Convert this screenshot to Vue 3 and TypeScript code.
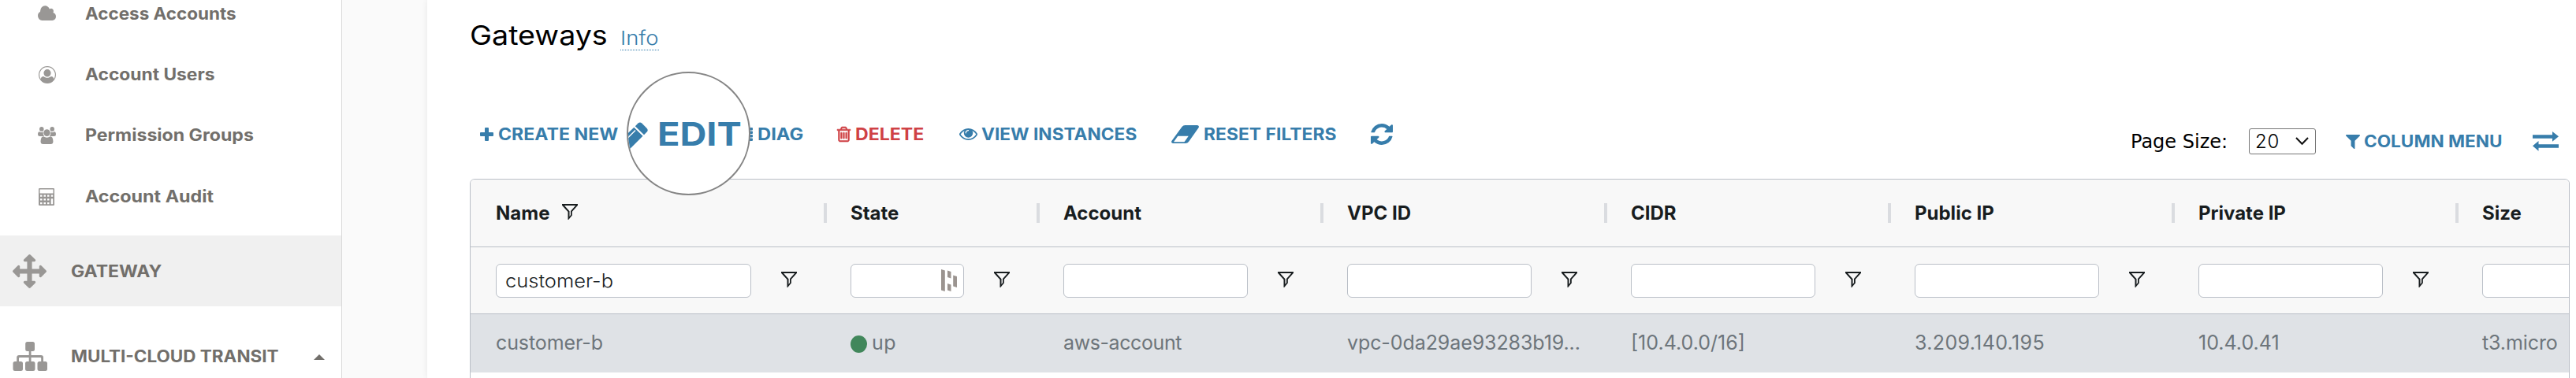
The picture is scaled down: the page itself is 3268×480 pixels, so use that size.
<script setup lang="ts">
interface Shape { box: string; d: string; rule?: 'evenodd' }

const icons: Record<string, Shape> = {
  cloud: { box: '64 256 1920 1280', d: 'M1984 1152q0 159-112.5 271.5t-271.5 112.5h-1088q-185 0-316.5-131.5t-131.5-316.5q0-132 71-241.5t187-163.5q-2-28-2-43 0-212 150-362t362-150q158 0 286.5 88t187.5 230q70-62 166-62 106 0 181 75t75 181q0 75-41 138 129 30 213 134.5t84 239.5z' },
  user: { box: '0 0 22 22', rule: 'evenodd', d: 'M11 0a11 11 0 1 0 0 22a11 11 0 0 0 0-22zM11 1.2a9.8 9.8 0 0 1 8.3 15c-.5-2.2-1.7-3.3-3.5-3.3c-2.8 2.4-6.8 2.4-9.6 0c-1.8 0-3 1.100-3.500 3.300a9.800 9.800 0 0 1 8.300-15zM11 4a4.600 4.800 0 1 1 0 9.600a4.600 4.800 0 1 1 0-9.600z' },
  users: { box: '0 0 24 22', d: 'M5 0a2.900 2.900 0 1 1 0 5.800a2.900 2.900 0 1 1 0-5.800zM19 0a2.900 2.900 0 1 1 0 5.800a2.900 2.900 0 1 1 0-5.800zM12 3.200a4.400 4.400 0 1 1 0 8.800a4.400 4.400 0 1 1 0-8.800zM2 6.200q3 1.500 4.900.4q-.3 3.400 1.600 5.400h-6q-2.500 0-2.500-2.200q0-3.600 2-3.600zM22 6.200q-3 1.500-4.900.4q.3 3.400-1.600 5.400h6q2.500 0 2.500-2.200q0-3.600-2-3.600zM7.500 12.300q4.500 2.800 9 0q3.500 0 3.800 6.200q0 3.500-3.300 3.500h-10q-3.300 0-3.300-3.500q.3-6.200 3.800-6.200z' },
  calc: { box: '0 0 20 22', rule: 'evenodd', d: 'M1.200 0h17.600q1.200 0 1.200 1.200v19.600q0 1.200-1.200 1.200h-17.600q-1.200 0-1.200-1.200v-19.600q0-1.200 1.200-1.200zM1.500 1.500v5h17v-5zM2 8.500v2.200h2.500v-2.200zM6.500 8.500v2.200h2.500v-2.200zM11 8.500v2.200h2.500v-2.200zM15.700 8.500v2.200h2.500v-2.200zM2 13.200v2.200h2.500v-2.200zM6.500 13.200v2.200h2.500v-2.200zM11 13.200v2.200h2.500v-2.200zM15.700 13.200v7h2.500v-7zM2 18v2.200h2.500v-2.200zM6.500 18v2.200h2.500v-2.200zM11 18v2.200h2.500v-2.200z' },
  arrows: { box: '0 0 1792 1792', d: 'M1792 896q0 26-19 45l-256 256q-19 19-45 19t-45-19-19-45v-128h-384v384h128q26 0 45 19t19 45-19 45l-256 256q-19 19-45 19t-45-19l-256-256q-19-19-19-45t19-45 45-19h128v-384h-384v128q0 26-19 45t-45 19-45-19l-256-256q-19-19-19-45t19-45l256-256q19-19 45-19t45 19 19 45v128h384v-384h-128q-26 0-45-19t-19-45 19-45l256-256q19-19 45-19t45 19l256 256q19 19 19 45t-19 45-45 19h-128v384h384v-128q0-26 19-45t45-19 45 19l256 256q19 19 19 45z' },
  sitemap: { box: '0 0 44 37', d: 'M18.500 0h7q2.500 0 2.500 2.500v7q0 2.500-2.500 2.500h-2v5h12.500q3 0 3 3v5h2.500q2.500 0 2.500 2.500v7q0 2.500-2.500 2.500h-7.500q-2.500 0-2.500-2.500v-7q0-2.500 2.500-2.500h2.200v-4q0-1-1-1h-11.700v5h2.500q2.500 0 2.500 2.500v7q0 2.500-2.500 2.500h-7.500q-2.500 0-2.500-2.500v-7q0-2.500 2.500-2.500h2.200v-5h-11.700q-1 0-1 1v4h2.500q2.500 0 2.500 2.500v7q0 2.500-2.500 2.500h-7.500q-2.500 0-2.500-2.500v-7q0-2.500 2.500-2.500h2.200v-5q0-3 3-3h12.500v-5h-2q-2.500 0-2.500-2.500v-7q0-2.500 2.500-2.500z' },
  caret: { box: '0 0 14 7', d: 'M0 7L7 0L14 7z' },
  plus: { box: '0 0 17 17', d: 'M7 0h3q1 0 1 1v5h5q1 0 1 1v3q0 1-1 1h-5v5q0 1-1 1h-3q-1 0-1-1v-5h-5q-1 0-1-1v-3q0-1 1-1h5v-5q0-1 1-1z' },
  list: { box: '0 0 9 17', d: 'M0 0h8q1 0 1 1v1.500q0 1-1 1h-8zM0 4.500h8q1 0 1 1v1.500q0 1-1 1h-8zM0 9h8q1 0 1 1v1.500q0 1-1 1h-8zM0 13.500h8q1 0 1 1v1.500q0 1-1 1h-8z' },
  trash: { box: '192 128 1408 1536', d: 'M704 736v576q0 14-9 23t-23 9h-64q-14 0-23-9t-9-23v-576q0-14 9-23t23-9h64q14 0 23 9t9 23zm256 0v576q0 14-9 23t-23 9h-64q-14 0-23-9t-9-23v-576q0-14 9-23t23-9h64q14 0 23 9t9 23zm256 0v576q0 14-9 23t-23 9h-64q-14 0-23-9t-9-23v-576q0-14 9-23t23-9h64q14 0 23 9t9 23zm128 724v-948h-896v948q0 22 7 40.500t14.500 27 10.500 8.500h832q3 0 10.500-8.500t14.500-27 7-40.500zm-672-1076h448l-48-117q-7-9-17-11h-317q-10 2-17 11zm928 32v64q0 14-9 23t-23 9h-96v948q0 83-47 143.500t-113 60.500h-832q-66 0-113-58.500t-47-141.500v-952h-96q-14 0-23-9t-9-23v-64q0-14 9-23t23-9h309l70-167q15-37 54-63t79-26h320q40 0 79 26t54 63l70 167h309q14 0 23 9t9 23z' },
  eye: { box: '0 384 1792 1152', d: 'M1664 960q-152-236-381-353 61 104 61 225 0 185-131.500 316.500t-316.500 131.500-316.500-131.500-131.500-316.500q0-121 61-225-229 117-381 353 133 205 333.500 326.500t434.500 121.500 434.500-121.500 333.500-326.500zm-720-384q0-20-14-34t-34-14q-125 0-214.500 89.500t-89.500 214.500q0 20 14 34t34 14 34-14 14-34q0-86 61-147t147-61q20 0 34-14t14-34zm848 384q0 34-20 69-140 230-376.500 368.500t-499.500 138.500-499.500-139-376.500-368q-20-35-20-69t20-69q140-229 376.500-368t499.500-139 499.500 139 376.500 368q20 35 20 69z' },
  eraser: { box: '0 0 35 23', rule: 'evenodd', d: 'M17.500 0h15.500q2.600.5 1.700 3l-12.700 18q-1.500 2-4 2h-16q-2.700-.6-1.600-3l13.100-18q1.500-2 4-2zM8.300 13.800l-5.300 7.400h13.500l5.300-7.400z' },
  refresh: { box: '128 128 1536 1536', d: 'M1639 1056q0 5-1 7-64 268-268 434.500t-478 166.500q-146 0-282.500-55t-243.500-157l-129 129q-19 19-45 19t-45-19-19-45v-448q0-26 19-45t45-19h448q26 0 45 19t19 45-19 45l-137 137q71 66 161 102t187 36q134 0 250-65t186-179q11-17 53-117 8-23 30-23h192q13 0 22.500 9.500t9.500 22.500zm25-800v448q0 26-19 45t-45 19h-448q-26 0-45-19t-19-45 19-45l138-138q-148-137-349-137-134 0-250 65t-186 179q-11 17-53 117-8 23-30 23h-199q-13 0-22.500-9.500t-9.500-22.500v-7q65-268 270-434.500t480-166.500q146 0 284 55.500t245 156.500l130-129q19-19 45-19t45 19 19 45z' },
  funnel: { box: '192 256 1408 1408', d: 'M1595 295q17 41-14 70l-493 493v742q0 42-39 59-13 5-25 5-27 0-45-19l-256-256q-19-19-19-45v-486l-493-493q-31-29-14-70 17-39 59-39h1280q42 0 59 39z' },
  exchange: { box: '0 0 33 25', d: 'M0 4.200h25v-4.200l8 6.300l-8 6.400v-4h-25zM33 16.200h-25.500v-4.200l-7.500 6.300l7.500 6.400v-4h25.500z' },
  outline: { box: '0 0 20 20', rule: 'evenodd', d: 'M0 0h20v1.700l-7.200 8v4.800l-4.600 5.500h-.7v-10l-7.500-8.300zM3 2l6.500 7.200v6.800l1.500-2v-4.900l6.200-7.100z' },
  marks: { box: '0 0 20 28', d: 'M0 0l4.800 1.500v26.500l-4.800-1.500zM8 1.500l4.500 1.500v8.500l-4.500-1.500zM8 18l4.500 1.500v8.500l-4.500-1.500zM15.200 7.500l4.800 1.500v14l-4.800-1.500z' },
}

interface Entry { label: string; icon: string; stretch: number }
const accounts: Entry[] = [
  { label: 'Access Accounts', icon: 'cloud', stretch: 1.07 },
  { label: 'Account Users', icon: 'user', stretch: 1.085 },
  { label: 'Permission Groups', icon: 'users', stretch: 1.1 },
  { label: 'Account Audit', icon: 'calc', stretch: 1.11 },
]
const actions: Entry[] = [
  { label: 'CREATE NEW', icon: 'plus', stretch: 1.102 },
  { label: 'DIAG', icon: 'list', stretch: 1.13 },
  { label: 'DELETE', icon: 'trash', stretch: 1.1 },
  { label: 'VIEW INSTANCES', icon: 'eye', stretch: 1.08 },
  { label: 'RESET FILTERS', icon: 'eraser', stretch: 1.09 },
]
const columns = [
  { title: 'Name', size: 'wide', filter: 'customer-b', value: 'customer-b', gap: -0.1 },
  { title: 'State', size: 'narrow', filter: '', value: 'up', gap: 0.4 },
  { title: 'Account', size: '', filter: '', value: 'aws-account', gap: -0.4 },
  { title: 'VPC ID', size: '', filter: '', value: 'vpc-0da29ae93283b19...', gap: -0.09 },
  { title: 'CIDR', size: '', filter: '', value: '[10.4.0.0/16]', gap: 0 },
  { title: 'Public IP', size: '', filter: '', value: '3.209.140.195', gap: 0.35 },
  { title: 'Private IP', size: '', filter: '', value: '10.4.0.41', gap: 0 },
  { title: 'Size', size: '', filter: '', value: 't3.micro', gap: -0.1 },
]
const spacing = (gap: number) => ({ letterSpacing: `${gap}px` })
const widen = (stretch: number) => ({ transform: `scaleX(${stretch})` })
</script>

<template>
  <div class="page">
    <nav class="sidebar">
      <div class="group">
        <a v-for="item in accounts" :key="item.label" class="sub">
          <span class="sub-icon">
            <svg :class="['ico', item.icon]" :viewBox="icons[item.icon].box" preserveAspectRatio="none">
              <path :d="icons[item.icon].d" :fill-rule="icons[item.icon].rule" />
            </svg>
          </span>
          <span class="label" :style="widen(item.stretch)">{{ item.label }}</span>
        </a>
      </div>
      <a class="top active">
        <svg class="ico arrows" :viewBox="icons.arrows.box" preserveAspectRatio="none"><path :d="icons.arrows.d" /></svg>
        <span class="label gateway">GATEWAY</span>
      </a>
      <a class="top transit">
        <svg class="ico sitemap" :viewBox="icons.sitemap.box" preserveAspectRatio="none"><path :d="icons.sitemap.d" /></svg>
        <span class="label multi">MULTI-CLOUD TRANSIT</span>
        <svg class="ico caret" :viewBox="icons.caret.box" preserveAspectRatio="none"><path :d="icons.caret.d" /></svg>
      </a>
    </nav>

    <main class="main">
      <header class="heading">
        <h1><span class="label title">Gateways</span></h1>
        <a class="info"><span class="label info-text">Info</span></a>
      </header>

      <div class="toolbar">
        <div class="actions">
          <button v-for="action in actions" :key="action.label" :class="['action', 'act-' + action.icon]">
            <span class="slot">
              <svg :class="['ico', action.icon]" :viewBox="icons[action.icon].box" preserveAspectRatio="none">
                <path :d="icons[action.icon].d" :fill-rule="icons[action.icon].rule" />
              </svg>
            </span>
            <span class="label" :style="widen(action.stretch)">{{ action.label }}</span>
          </button>
          <button class="action">
            <svg class="ico refresh" :viewBox="icons.refresh.box" preserveAspectRatio="none"><path :d="icons.refresh.d" /></svg>
          </button>
        </div>
        <div class="paging">
          <span class="size-label">Page Size:</span>
          <span class="select">20
            <svg class="chevron" viewBox="0 0 17 10"><path d="M1 1L8.500 8.700L16 1" /></svg>
          </span>
          <button class="action">
            <span class="slot menu-slot">
              <svg class="ico funnel" :viewBox="icons.funnel.box" preserveAspectRatio="none"><path :d="icons.funnel.d" /></svg>
            </span>
            <span class="label menu">COLUMN MENU</span>
          </button>
          <button class="action">
            <svg class="ico exchange" :viewBox="icons.exchange.box" preserveAspectRatio="none"><path :d="icons.exchange.d" /></svg>
          </button>
        </div>
      </div>

      <section class="grid">
        <div class="row head">
          <div v-for="col in columns" :key="col.title" :class="['cell', col.size]">
            <span>{{ col.title }}</span>
            <svg v-if="col.filter" class="outline" :viewBox="icons.outline.box"><path :d="icons.outline.d" fill-rule="evenodd" /></svg>
            <i class="divider"></i>
          </div>
        </div>
        <div class="row filters">
          <div v-for="col in columns" :key="col.title" :class="['cell', col.size]">
            <div class="field">
              <span class="label typed">{{ col.filter }}</span>
              <svg v-if="col.title === 'State'" class="marks" :viewBox="icons.marks.box" preserveAspectRatio="none"><path :d="icons.marks.d" /></svg>
            </div>
            <svg class="outline" :viewBox="icons.outline.box"><path :d="icons.outline.d" fill-rule="evenodd" /></svg>
          </div>
        </div>
        <div class="row selected">
          <div v-for="col in columns" :key="col.title" :class="['cell', col.size]">
            <i v-if="col.title === 'State'" class="dot"></i>
            <span :style="spacing(col.gap)">{{ col.value }}</span>
          </div>
        </div>
      </section>

      <div class="lens">
        <svg class="pencil" viewBox="0 0 30 50">
          <path d="M14.500 11.500q2.500-2 4.800 0l6.400 6.400q2 2.300 0 4.600l-3.700 3.800l-11.200-11z" />
          <path d="M9.300 16.700l11.200 11.100l-20 20l-12-11z" />
          <path class="shine" d="M11 20.500L-4 35.500" />
        </svg>
        <span class="label edit">EDIT</span>
      </div>
    </main>
  </div>
</template>

<style>
body { margin: 0; overflow: hidden; }
</style>

<style scoped>
.page { display: flex; width: 3268px; height: 480px; overflow: hidden; background: #fafafa; font-family: Inter, "Liberation Sans", sans-serif; }
.page * { box-sizing: border-box; }
svg { display: block; flex: none; overflow: visible; }
.ico { fill: currentColor; }
.label { display: inline-block; transform-origin: 0 50%; }

.sidebar { flex: none; width: 434px; height: 480px; overflow: hidden; background: #fff; border-right: 1px solid #d9d9d9; color: #726f6b; font-size: 21px; font-weight: 700; line-height: 30px; white-space: nowrap; }
.sidebar .ico { color: #999795; }
.group { margin-top: -21px; height: 320px; }
.sub { display: flex; align-items: center; height: 77.300px; }
.sub-icon { width: 60px; margin-left: 48px; }
.cloud { width: 23px; height: 17px; }
.user { width: 22px; height: 22px; margin-left: 1px; }
.users { width: 23px; height: 22px; }
.calc { width: 20px; height: 22px; margin-left: 1px; }
.top { display: flex; align-items: center; padding-left: 16px; }
.active { height: 90px; background: #f0f0f0; margin-right: -1px; border-right: 1px solid #cbcbcb; }
.transit { height: 127px; }
.arrows { width: 43px; height: 43px; }
.sitemap { width: 44px; height: 37px; }
.gateway { margin: 2px 0 0 30.500px; transform: scaleX(1.095); }
.multi { width: 264px; margin-left: 30px; transform: scaleX(1.07); }
.sidebar .caret { width: 14px; height: 7px; margin: 2px 0 0 44px; color: #726f6b; }

.main { position: relative; flex: 1; min-width: 0; margin-left: 108px; padding-left: 54px; background: #fff; box-shadow: 0 0 8px rgba(0, 0, 0, .08); }
.heading { display: flex; align-items: baseline; height: 89px; }
h1 { margin: 0; font-size: 34.500px; font-weight: 400; line-height: 89px; color: #000; width: 191px; white-space: nowrap; }
.title { transform: scaleX(1.09); }
.info { font-size: 24.500px; line-height: 25px; font-weight: 300; padding-bottom: 2px; border-bottom: 1px dotted #377dab; color: #377dab; width: 49px; }
.info-text { transform: scaleX(1.12); }

.toolbar { display: grid; grid-template-columns: 2107px 1fr; height: 138px; align-items: start; }
.actions { display: grid; grid-template-columns: 337px 116px 155px 269px 253px 40px; padding: 61.500px 0 0 13px; }
.action { display: flex; align-items: center; height: 40px; padding: 0; border: 0; background: none; font: 700 21px/40px Inter, sans-serif; color: #377dab; white-space: nowrap; }
.act-trash { color: #cf4145; }
.slot { width: 23px; }
.act-list .slot { width: 14.500px; }
.act-eye .slot { width: 28px; }
.act-eraser .slot { width: 40.500px; }
.menu-slot { width: 23px; }
.menu { transform: scaleX(1.075); }
.plus { width: 17px; height: 17px; }
.list { width: 9px; height: 17px; }
.trash { width: 17px; height: 19px; stroke: currentColor; stroke-width: 50; }
.eye { width: 23px; height: 15px; }
.eraser { width: 35px; height: 23px; }
.refresh { width: 28px; height: 27px; }
.funnel { width: 18px; height: 18px; }
.exchange { width: 33px; height: 25px; }
.paging { display: grid; grid-template-columns: 150px 123px 237px 33px; align-items: center; padding-top: 70.500px; height: 110px; }
.size-label { font: 24px/40px "DejaVu Sans", sans-serif; color: #000; white-space: nowrap; }
.select { display: flex; align-items: center; justify-content: space-between; width: 85px; height: 33px; margin-top: -1px; padding: 0 8px 0 7px; border: 1px solid #767676; border-radius: 3px; font-size: 24px; font-weight: 300; letter-spacing: .8px; line-height: 31px; color: #000; background: #fff; }
.chevron { width: 17px; height: 10px; fill: none; stroke: #111; stroke-width: 2; }

.grid { width: 2664px; height: 300px; overflow: hidden; border: 1px solid #babfc7; border-radius: 6px 6px 0 0; background: #fff; }
.row { display: flex; }
.cell { position: relative; display: flex; align-items: center; flex: none; width: 360px; padding-left: 32px; white-space: nowrap; }
.wide { width: 450px; }
.narrow { width: 270px; }
.head { height: 86px; border-bottom: 1px solid #babfc7; background: #f8f8f8; color: #181d1f; font-size: 24px; font-weight: 700; }
.head .outline { margin: -3px 0 0 15.500px; }
.divider { position: absolute; right: -2px; top: 30px; width: 4px; height: 25px; background: #dadce0; }
.filters { height: 85px; border-bottom: 1px solid #babfc7; background: #f8f8f8; }
.field { display: flex; align-items: center; justify-content: space-between; width: 234px; height: 43px; padding: 0 8px 0 11px; border: 1px solid #babfc7; border-radius: 6px; background: #fff; color: #181d1f; font-size: 23.500px; font-weight: 300; }
.typed { transform: scaleX(1.085); }
.wide .field { width: 324px; }
.narrow .field { width: 144px; }
.filters .outline { margin: -3px 0 0 38px; }
.outline { width: 20px; height: 20px; fill: #181d1f; }
.marks { width: 20px; height: 28px; fill: #9b9490; }
.selected { height: 74px; background: #dfe2e6; color: #6d757b; font-size: 25px; padding-bottom: 2px; }
.dot { width: 21px; height: 22px; margin: 4px 6px 0 0; border-radius: 50%; background: #41875b; }

.lens { position: absolute; left: 253px; top: 91px; width: 157px; height: 157px; overflow: hidden; border: 2.500px solid #858585; border-radius: 50%; background: #fff; color: #377dab; display: flex; align-items: center; font-size: 41.500px; font-weight: 700; }
.edit { transform: scaleX(1.13); }
.pencil { width: 30px; height: 50px; margin: 0 9px 0 -2px; fill: currentColor; }
.shine { stroke: #fff; stroke-width: 1.500; }
</style>
